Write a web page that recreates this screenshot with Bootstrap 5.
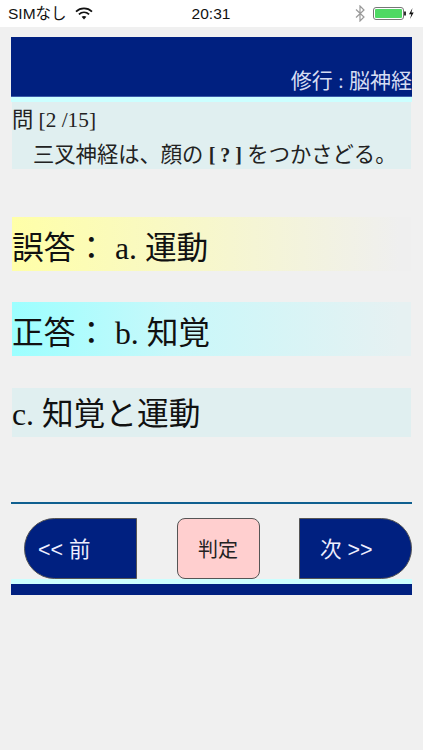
<!DOCTYPE html>
<html lang="ja">
<head>
<meta charset="utf-8">
<meta name="viewport" content="width=device-width, initial-scale=1">
<link href="https://cdn.jsdelivr.net/npm/bootstrap@5.3.0/dist/css/bootstrap.min.css" rel="stylesheet">
<style>
html,body{height:100%}
body{background:#f0f0f0;color:#111;font-family:"Liberation Serif","Noto Sans CJK JP",serif;width:423px;height:750px;overflow:hidden}
.sbar{height:27px;background:#fff;padding:0 9px 0 8px;font-family:"Liberation Sans","Noto Sans CJK JP",sans-serif;font-size:15.5px;color:#111}
.sleft,.sright{width:150px}
.stime{font-size:15.5px}
.app{padding:10px 11px 0}
.hdr{height:60px;background:#002080;color:#d5dcf2;font-size:21px;line-height:26px;padding-bottom:2px;border:1px solid #3a5aa8;border-width:0 0 1px;white-space:nowrap}
.strip{height:5px;background:#ccffff}
.qbox{background:#e0eff0;height:67px;margin:0 1px;padding:3px 0 0;font-size:21.3px;line-height:30px;color:#222}
.qbox .qtxt{padding-left:21px;line-height:34px;padding-top:3px;white-space:nowrap}
.qbox b{font-size:20px}
.opt{margin:0 1px;font-size:31.7px;line-height:1;white-space:nowrap}
.o1{margin-top:48px;height:54px;padding-top:9px;background:linear-gradient(90deg,#ffffa8,#efefef 97%)}
.o2{margin-top:31px;height:54px;padding-top:9px;background:linear-gradient(90deg,#9cffff,#c8f8fa 40%,#e6f1f2 97%)}
.o3{margin-top:32px;height:49px;padding-top:4px;background:#e0eff0}
.rule{height:2px;background:#0f5f8f;margin:65px 0 0;opacity:1;border:0}
.btns{margin-top:14px;height:61px;padding-left:13px}
.nbtn{background:#002080;border:1px solid #555;color:#eef;font-size:21.5px;width:113px;height:61px;padding:3px 0 0;font-family:"Liberation Sans","Noto Sans CJK JP",sans-serif}
.nbtn:hover,.nbtn:active{background:#002080!important;color:#eef!important}
.nl{border-radius:31px 0 0 31px;text-align:left;padding-left:13px}
.nr{border-radius:0 31px 31px 0;text-align:left;padding-left:20px}
.jbtn{background:#ffcfcf;border:1px solid #555;border-radius:8px;width:83px;height:61px;color:#222;font-size:20px;padding:2px 0 0;font-family:"Liberation Sans","Noto Sans CJK JP",sans-serif}
.foot{height:11px;background:#002080}
</style>
</head>
<body>
<div class="sbar d-flex align-items-center justify-content-between">
  <div class="sleft d-flex align-items-center gap-2"><span>SIMなし</span>
    <svg width="18" height="13" viewBox="0 0 18 13"><path d="M1 4.600C5.600.4 12.400.4 17 4.600" fill="none" stroke="#111" stroke-width="1.800"/><path d="M3.900 7.300c3-2.700 7.200-2.700 10.200 0" fill="none" stroke="#111" stroke-width="1.800"/><path d="M6.600 9.800c1.400-1.200 3.400-1.200 4.800 0L9 12.600z" fill="#111"/></svg>
  </div>
  <div class="stime">20:31</div>
  <div class="sright d-flex align-items-center justify-content-end gap-2">
    <svg width="10" height="17" viewBox="0 0 10 17"><path d="M1 4.500l8 7.500-4 4V1l4 4-8 7.500" fill="none" stroke="#999" stroke-width="1.200"/></svg>
    <svg width="41" height="13" viewBox="0 0 41 13"><rect x=".5" y=".5" width="30" height="12" rx="2.500" fill="none" stroke="#777"/><rect x="2" y="2" width="27" height="9" rx="1" fill="#4fd964"/><rect x="31" y="4.500" width="2" height="4" fill="#333"/><path d="M39.500 1l-3.500 6.300h2.300L37 12l3.700-6.500h-2.300z" fill="#111"/></svg>
  </div>
</div>
<main class="app">
  <div class="hdr d-flex align-items-end justify-content-end">修行 : 脳神経</div>
  <div class="strip"></div>
  <div class="qbox">
    <div>問 [2 /15]</div>
    <div class="qtxt">三叉神経は、顔の <b>[ ? ]</b> をつかさどる。</div>
  </div>
  <div class="opt o1 d-flex align-items-center">誤答： a. 運動</div>
  <div class="opt o2 d-flex align-items-center">正答： b. 知覚</div>
  <div class="opt o3 d-flex align-items-center">c. 知覚と運動</div>
  <hr class="rule">
  <div class="btns d-flex justify-content-between">
    <button type="button" class="btn nbtn nl">&lt;&lt; 前</button>
    <button type="button" class="btn jbtn">判定</button>
    <button type="button" class="btn nbtn nr">次 &gt;&gt;</button>
  </div>
  <div class="strip"></div>
  <div class="foot"></div>
</main>
</body>
</html>
